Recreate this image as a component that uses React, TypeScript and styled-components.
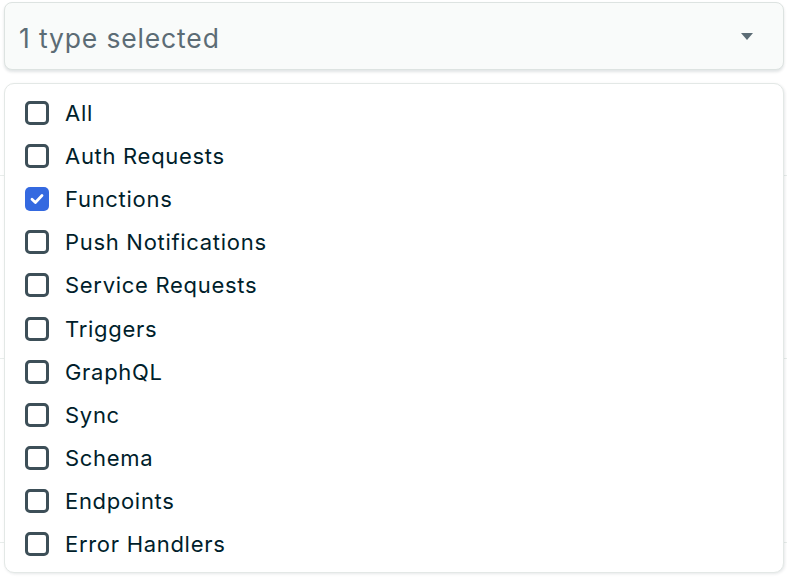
import React, { useState } from "react";
import styled, { createGlobalStyle } from "styled-components";

const GlobalStyle = createGlobalStyle`
  html, body {
    margin: 0;
    padding: 0;
    background: #ffffff;
  }
  body {
    font-family: Inter, "Noto Sans", sans-serif;
    -webkit-font-smoothing: antialiased;
  }
`;

const Page = styled.div`
  position: relative;
  width: 787px;
  height: 577px;
  overflow: hidden;
  background: #ffffff;
`;

// faint table rows peeking out behind the open menu
const BackdropTable = styled.div`
  display: flex;
  flex-direction: column;
  padding-top: 175px;
`;

const BackdropRow = styled.div<{ $height: number }>`
  height: ${({ $height }) => $height}px;
  border-top: 1px solid #e8edeb;
`;

const Overlay = styled.div`
  position: absolute;
  top: 2px;
  left: 4px;
  width: 780px;
  display: flex;
  flex-direction: column;
  gap: 13px;
`;

const SelectButton = styled.button`
  display: flex;
  align-items: center;
  justify-content: space-between;
  height: 68px;
  padding: 3px 30px 0 14px;
  background: #f9fbfa;
  border: 1px solid #dde3e1;
  border-radius: 8px;
  box-shadow: 0 2px 3px rgba(0, 30, 43, 0.12);
  font-family: Inter, "Noto Sans", sans-serif;
  font-size: 26.5px;
  letter-spacing: 0.85px;
  color: #5c6c75;
  cursor: pointer;
`;

const Caret = styled.span`
  width: 0;
  height: 0;
  margin-bottom: 2px;
  border-left: 6px solid transparent;
  border-right: 6px solid transparent;
  border-top: 7px solid #5c6c75;
`;

const Menu = styled.div`
  display: flex;
  flex-direction: column;
  height: 490px;
  box-sizing: border-box;
  padding: 7px 0 0 20px;
  background: #ffffff;
  border: 1px solid #e3e8e6;
  border-radius: 10px;
  box-shadow: 1px 1px 3px rgba(0, 30, 43, 0.1);
`;

const Option = styled.label`
  display: flex;
  align-items: center;
  gap: 16px;
  height: 43.2px;
  font-size: 22px;
  letter-spacing: 0.7px;
  color: #001e2b;
  cursor: pointer;
`;

const Box = styled.span<{ $checked: boolean }>`
  display: flex;
  align-items: center;
  justify-content: center;
  width: 24px;
  height: 24px;
  box-sizing: border-box;
  border-radius: 5px;
  border: ${({ $checked }) => ($checked ? "none" : "3px solid #3d4f58")};
  background: ${({ $checked }) => ($checked ? "#3469e0" : "#ffffff")};
`;

const options = [
  "All",
  "Auth Requests",
  "Functions",
  "Push Notifications",
  "Service Requests",
  "Triggers",
  "GraphQL",
  "Sync",
  "Schema",
  "Endpoints",
  "Error Handlers",
];

const Check = () => (
  <svg width="14" height="12" viewBox="0 0 14 12" fill="none">
    <path
      d="M2 6.2 L5.4 9.4 L12 2.6"
      stroke="#ffffff"
      strokeWidth="2.8"
      strokeLinecap="round"
      strokeLinejoin="round"
    />
  </svg>
);

const App = () => {
  const [selected, setSelected] = useState<string[]>(["Functions"]);

  const toggle = (name: string) => {
    setSelected((prev) =>
      prev.includes(name) ? prev.filter((n) => n !== name) : [...prev, name]
    );
  };

  return (
    <Page>
      <GlobalStyle />
      <BackdropTable>
        <BackdropRow $height={182} />
        <BackdropRow $height={183} />
        <BackdropRow $height={40} />
      </BackdropTable>
      <Overlay>
        <SelectButton>
          <span>
            {selected.length} type{selected.length === 1 ? "" : "s"} selected
          </span>
          <Caret />
        </SelectButton>
        <Menu>
          {options.map((name) => {
            const checked = selected.includes(name);
            return (
              <Option key={name} onClick={() => toggle(name)}>
                <Box $checked={checked}>{checked && <Check />}</Box>
                {name}
              </Option>
            );
          })}
        </Menu>
      </Overlay>
    </Page>
  );
};

export default App;
